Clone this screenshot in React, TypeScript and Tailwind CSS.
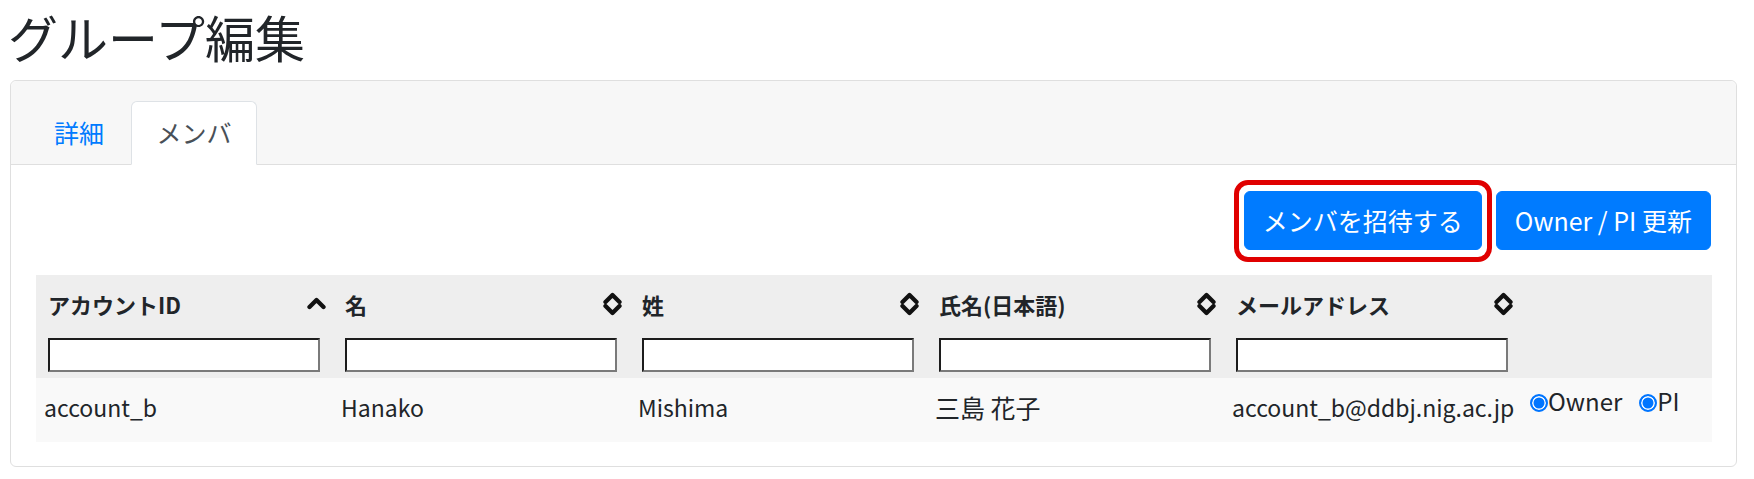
import React from "react";

const FONT = { fontFamily: '"Noto Sans CJK JP", "Noto Sans", sans-serif' };

function SortBoth() {
  return (
    <svg width="19" height="24" viewBox="0 0 19 24" className="block">
      <polyline points="2.5,10 9.5,3 16.5,10" fill="none" stroke="#111" strokeWidth="4.3" strokeLinecap="round" strokeLinejoin="round" />
      <polyline points="2.5,14 9.5,21 16.5,14" fill="none" stroke="#111" strokeWidth="4.3" strokeLinecap="round" strokeLinejoin="round" />
    </svg>
  );
}

function SortUp() {
  return (
    <svg width="19" height="13" viewBox="0 0 19 13" className="block">
      <polyline points="2.5,10 9.5,3 16.5,10" fill="none" stroke="#111" strokeWidth="4.3" strokeLinecap="round" strokeLinejoin="round" />
    </svg>
  );
}

function Radio() {
  return (
    <span className="inline-block w-[18px] h-[18px] rounded-full border-[2px] border-[#0075ff] bg-[#0075ff] shadow-[inset_0_0_0_1.5px_white] shrink-0" />
  );
}

const columns = [
  { label: "アカウントID", sort: "up" },
  { label: "名", sort: "both" },
  { label: "姓", sort: "both" },
  { label: "氏名(日本語)", sort: "both" },
  { label: "メールアドレス", sort: "both" },
];

const row: { v: string; cjk: boolean }[] = [
  { v: "account_b", cjk: false },
  { v: "Hanako", cjk: false },
  { v: "Mishima", cjk: false },
  { v: "三島 花子", cjk: true },
  { v: "account_b@ddbj.nig.ac.jp", cjk: false },
];

export default function App() {
  return (
    <div className="w-[1754px] h-[479px] bg-white text-[#212529] pl-[10px]" style={FONT}>
      <h2 className="text-[50px] leading-[60px] font-normal mt-[6px] mb-[14px] -ml-[2px]">グループ編集</h2>

      <div className="w-[1727px] border border-[#dfdfdf] rounded-[6px] bg-white">
        {/* header */}
        <div className="bg-[#f7f7f7] border-b border-[#dfdfdf] rounded-t-[6px] pt-[20px] pl-[16px]">
          <div className="flex -mb-px text-[25px] leading-[37.5px]">
            <div className="w-[104px] h-[64px] flex items-center justify-center text-[#007bff] border border-transparent">
              詳細
            </div>
            <div className="w-[126px] h-[64px] flex items-center justify-center text-[#495057] bg-white border border-[#dee2e6] border-b-white rounded-t-[6px]">
              メンバ
            </div>
          </div>
        </div>

        {/* body */}
        <div className="px-[25px] pt-[26px] pb-[24px]">
          <div className="flex justify-end gap-[14px] mb-[25px]">
            <div className="relative">
              <button className="h-[59px] px-[18px] rounded-[6px] bg-[#007bff] text-white text-[25px] leading-[37.5px] border border-[#007bff]">
                メンバを招待する
              </button>
              <div className="absolute -left-[10px] -right-[10px] -top-[11px] -bottom-[12px] border-[5px] border-[#e00000] rounded-[14px] pointer-events-none" />
            </div>
            <button className="h-[59px] px-[18px] rounded-[6px] bg-[#007bff] text-white text-[25px] leading-[37.5px] border border-[#007bff]">
              Owner / PI 更新
            </button>
          </div>

          <div className="grid grid-cols-[297px_297px_297px_297px_297px_191px]">
            {columns.map((c) => (
              <div key={c.label} className="relative bg-[#eeeeee] pt-[12.5px] pb-[6px] pl-[12px] pr-[13px]">
                <div className="h-[33px] leading-[33px] text-[22px] font-bold whitespace-nowrap">{c.label}</div>
                <div className={"absolute " + (c.sort === "up" ? "right-[7px] top-[22px]" : "right-[8px] top-[17px]")}>
                  {c.sort === "up" ? <SortUp /> : <SortBoth />}
                </div>
                <input
                  type="text"
                  readOnly
                  className="block mt-[17.5px] w-[272px] h-[34px] bg-white border-2 border-t-[#1c1c1c] border-l-[#1c1c1c] border-r-[#7a7a7a] border-b-[#7a7a7a] outline-none"
                />
              </div>
            ))}
            <div className="bg-[#eeeeee]" />

            {row.map((r, i) => (
              <div
                key={i}
                className={
                  "bg-[#f9f9f9] h-[64px] pl-[8px] pt-[11px] leading-[37.5px] whitespace-nowrap " +
                  (r.cjk ? "text-[25px]" : "text-[23px]")
                }
              >
                {r.v}
              </div>
            ))}
            <div className="bg-[#f9f9f9] h-[64px] pl-[9px] pt-[4px] text-[24px] leading-[37.5px] flex items-start whitespace-nowrap">
              <div className="flex items-center h-[37.5px]">
                <span className="translate-y-[2px] inline-flex"><Radio /></span>
                <span>Owner</span>
                <span className="ml-[17px] translate-y-[2px] inline-flex"><Radio /></span>
                <span>PI</span>
              </div>
            </div>
          </div>
        </div>
      </div>
    </div>
  );
}
